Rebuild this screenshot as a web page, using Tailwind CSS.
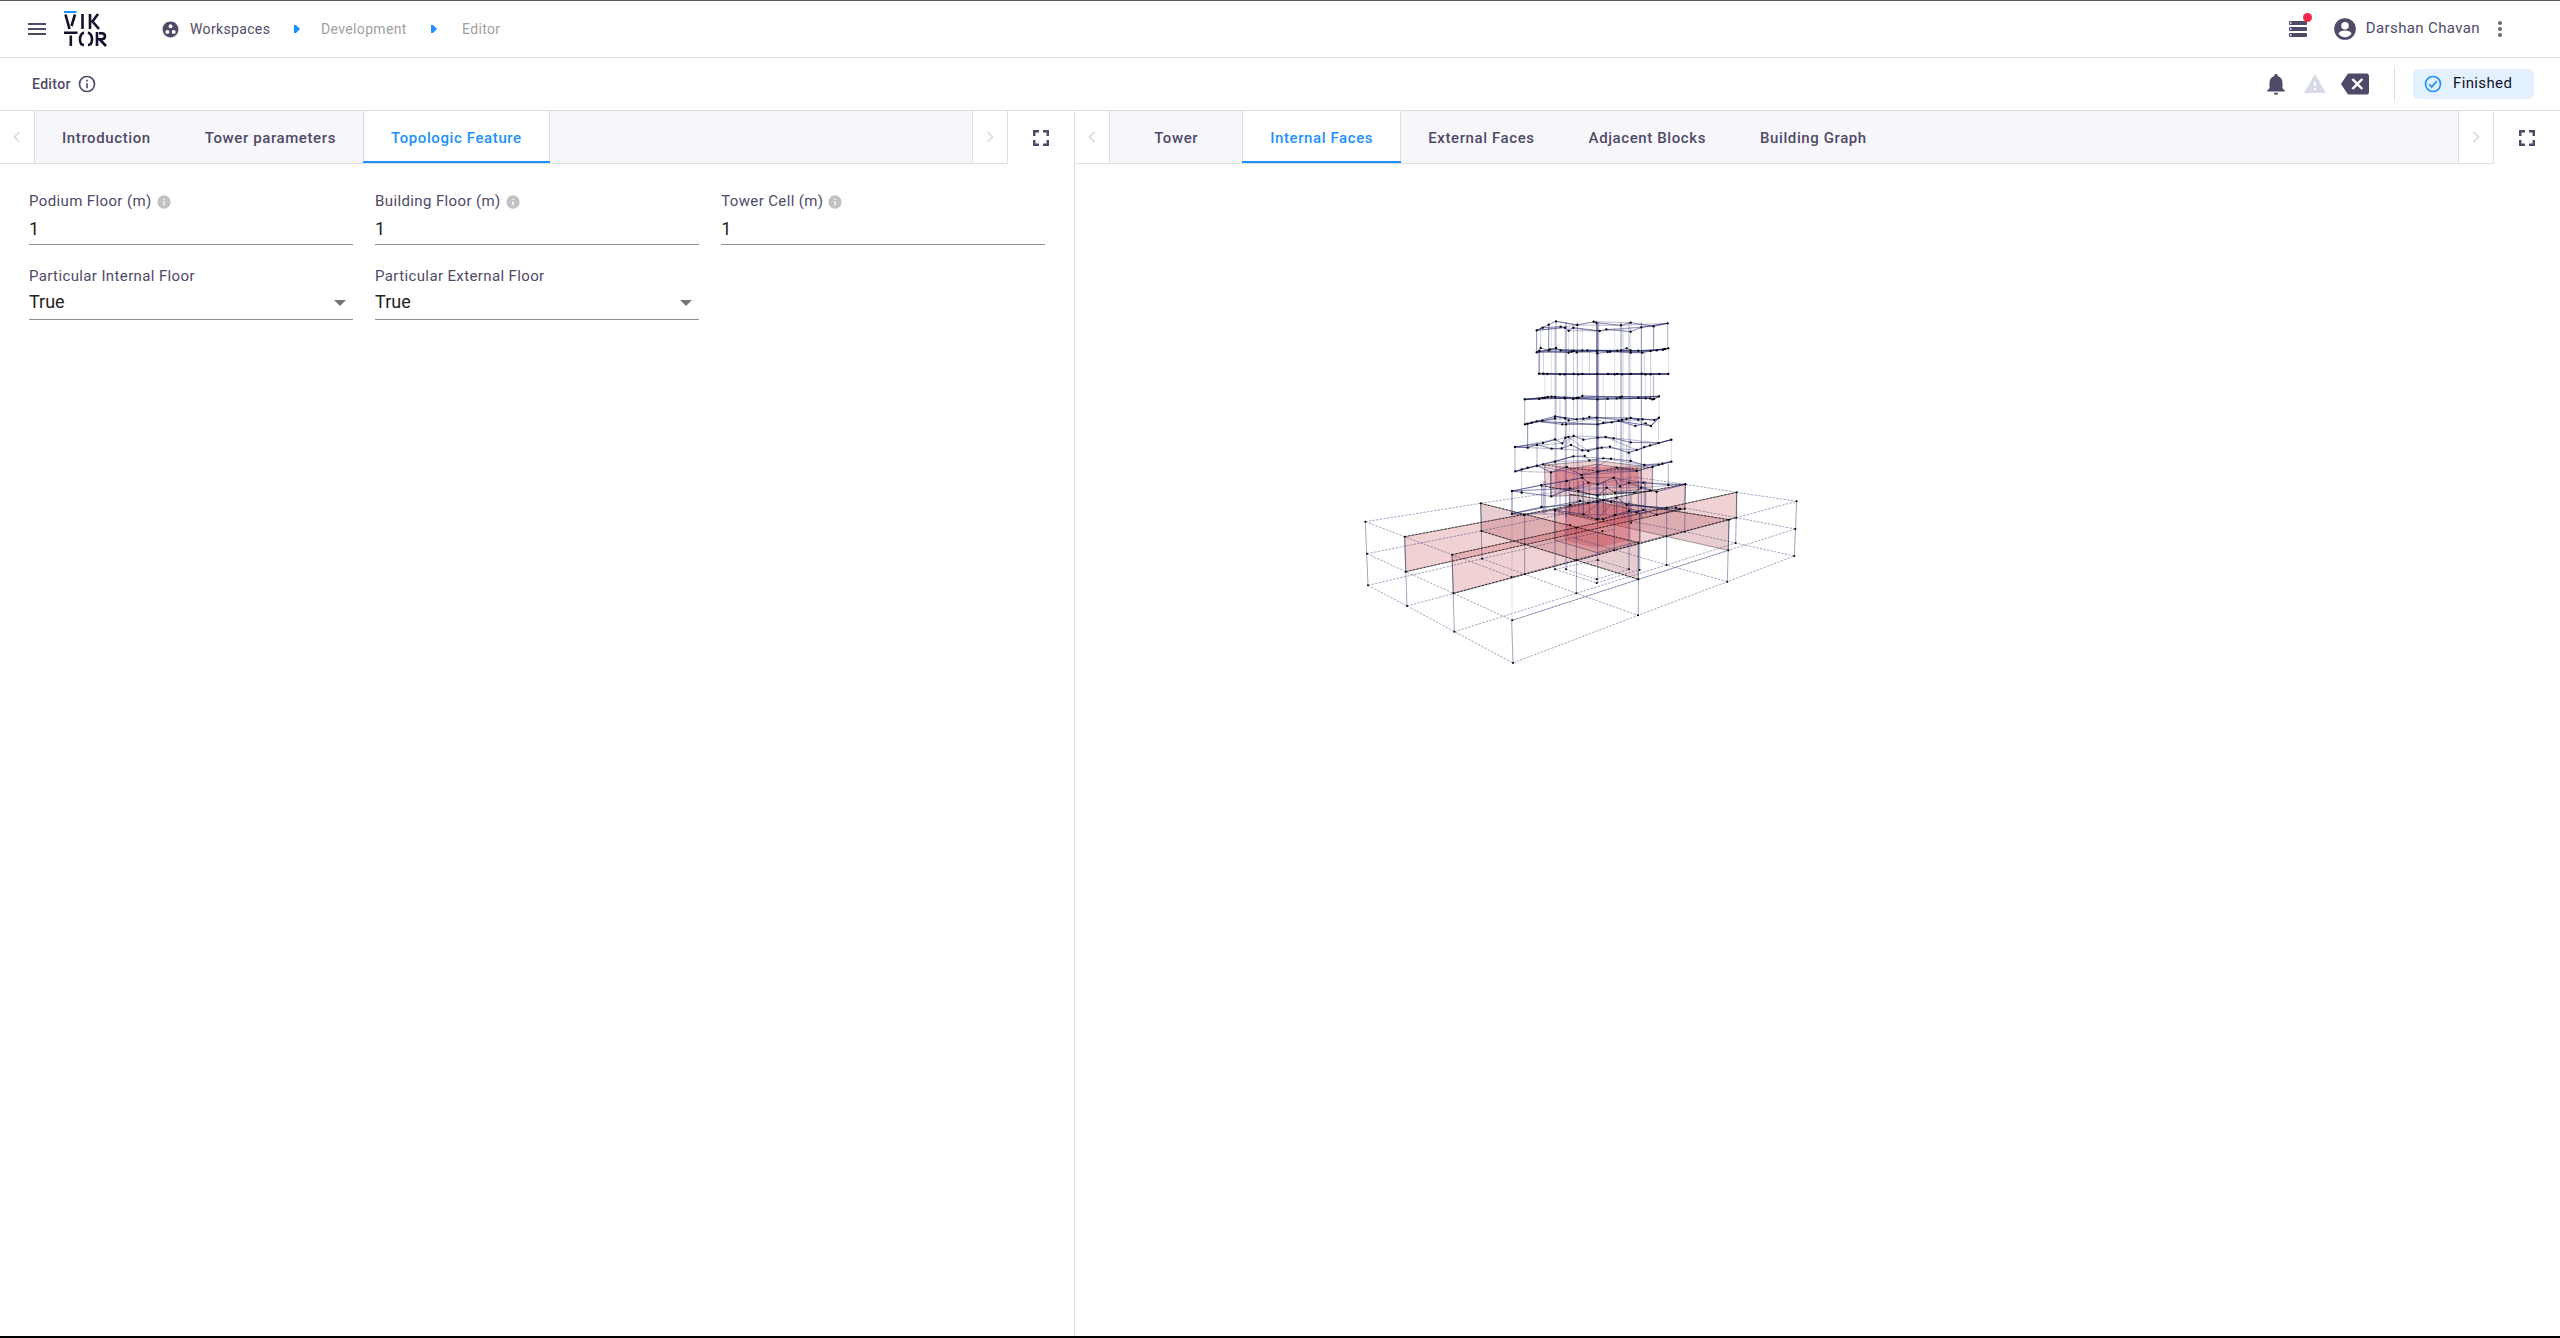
<!DOCTYPE html>
<html lang="en">
<head>
<meta charset="utf-8">
<title>Editor</title>
<script src="https://cdn.jsdelivr.net/npm/@tailwindcss/browser@4"></script>
</head>
<body class="min-h-screen flex flex-col bg-white text-[#4f4a67] font-[Roboto,sans-serif] text-sm border-t border-t-[#5c5a66] border-b-2 border-b-black">
<header class="h-[57px] flex items-center border-b border-[#dedee0] pl-[25px] pr-12">
  <button aria-label="Menu"><svg class="size-6" viewBox="0 0 24 24" fill="currentColor"><path d="M3 6h18v2H3zM3 11h18v2H3zM3 16h18v2H3z"/></svg></button>
  <a href="#" aria-label="Viktor" class="ml-[15px]"><svg class="w-[43px] h-9" viewBox="0 0 43 36" fill="none" stroke="#14122b" stroke-width="2.6"><path d="M0 1h12.500" stroke="#1e90ff" stroke-width="2"/><path d="M1.500 3.500L5.500 18M11 3.500L7.500 15M18.500 3v15M26 3v15M34 3L28.500 10.500L35 18M0 21.800h13.500M6.800 24.500V35M20 21.500Q16 23 16 28.500T20 34M24 21.500Q28 23 28 28.500T24 34M33 21v14M35 22.200h2.500q3.500 0 3.500 3t-3.500 3H35.500L42 35"/></svg></a>
  <nav class="flex items-center ml-[54px] tracking-wide" aria-label="Breadcrumb">
    <svg class="size-[19px] mr-2.5" viewBox="0 0 24 24" fill="currentColor"><path d="M12 2C6.480 2 2 6.480 2 12s4.480 10 10 10 10-4.480 10-10S17.520 2 12 2zM8 17.500a2.500 2.500 0 110-5 2.500 2.500 0 010 5zM9.500 8a2.500 2.500 0 115 0 2.500 2.500 0 01-5 0zM16 17.500a2.500 2.500 0 110-5 2.500 2.500 0 010 5z"/></svg>
    <a href="#" class="w-[104px]">Workspaces</a>
    <svg class="w-1.5 h-2 mr-[21px]" viewBox="0 0 6 8" fill="#1e90ff"><path d="M0 0h2l4 4-4 4H0z"/></svg>
    <a href="#" class="w-[110px] text-[#9f9fa3]">Development</a>
    <svg class="w-1.5 h-2 mr-[25px]" viewBox="0 0 6 8" fill="#1e90ff"><path d="M0 0h2l4 4-4 4H0z"/></svg>
    <a href="#" class="text-[#9f9fa3]">Editor</a>
  </nav>
  <div class="ml-auto flex items-center">
    <button class="relative mr-[22px]" aria-label="Jobs"><svg class="size-6" viewBox="0 0 24 24" fill="currentColor"><path fill-rule="evenodd" d="M4 4h16a1 1 0 011 1v2a1 1 0 01-1 1H4a1 1 0 01-1-1V5a1 1 0 011-1zm0 1.300v1.400h1.500V5.300zM4 10h16a1 1 0 011 1v2a1 1 0 01-1 1H4a1 1 0 01-1-1V11a1 1 0 011-1zm0 1.300v1.400h1.500v-1.400zM4 16h16a1 1 0 011 1V19a1 1 0 01-1 1H4a1 1 0 01-1-1v-2a1 1 0 011-1zm0 1.300v1.400h1.500v-1.400z"/></svg><span class="absolute -top-1 -right-0.5 size-[9px] rounded-full bg-[#f02849]"></span></button>
    <svg class="size-[26px] mr-2" viewBox="0 0 24 24" fill="currentColor"><path d="M12 2a10 10 0 100 20 10 10 0 000-20zm0 3.500a3.500 3.500 0 110 7 3.500 3.500 0 010-7zm0 14.100a7.200 7.200 0 01-6-3.200c.03-2 4-3.100 6-3.100s5.970 1.100 6 3.100a7.200 7.200 0 01-6 3.200z"/></svg>
    <span class="text-[15px] tracking-wide mr-2">Darshan Chavan</span>
    <button aria-label="More"><svg class="size-6" viewBox="0 0 24 24" fill="#6c6a72"><circle cx="12" cy="6" r="2"/><circle cx="12" cy="12" r="2"/><circle cx="12" cy="18" r="2"/></svg></button>
  </div>
</header>
<div class="h-[53px] flex items-center border-b border-[#dedee0] pl-8 pr-[26px]">
  <h1 class="font-medium mr-1.5 tracking-wide">Editor</h1>
  <button aria-label="Info"><svg class="size-5" viewBox="0 0 24 24" fill="currentColor"><path fill-rule="evenodd" d="M12 2a10 10 0 100 20 10 10 0 000-20zm0 2a8 8 0 110 16 8 8 0 010-16zM11 7h2v2h-2zM11 11h2v6h-2z"/></svg></button>
  <div class="ml-auto flex items-center">
    <button class="mr-3.5" aria-label="Notifications"><svg class="size-[26px]" viewBox="0 0 24 24" fill="currentColor"><path d="M12 22a2 2 0 002-2h-4a2 2 0 002 2zm6-6v-5c0-3.070-1.640-5.640-4.500-6.320V4a1.500 1.500 0 00-3 0v.68C7.630 5.360 6 7.920 6 11v5l-2 2v1h16v-1z"/></svg></button>
    <button class="mr-3.5" aria-label="Warnings"><svg class="size-6" viewBox="0 0 24 24" fill="#d9daE8"><path d="M1 21h22L12 2zm12-3h-2v-2h2zm0-4h-2v-4h2z"/></svg></button>
    <button class="mr-[25px]" aria-label="Clear"><svg class="size-7" viewBox="0 0 24 24" fill="currentColor"><path d="M22 3H7c-.69 0-1.230.35-1.590.88L0 12l5.410 8.110c.36.53.9.890 1.590.890h15c1.100 0 2-.9 2-2V5c0-1.100-.9-2-2-2zm-3 12.590L17.590 17 14 13.410 10.410 17 9 15.590 12.590 12 9 8.410 10.410 7 14 10.590 17.590 7 19 8.410 15.410 12z"/></svg></button>
    <div class="h-9 w-px bg-[#e2e2e6] mr-[18px]"></div>
    <div class="h-[30px] w-[121px] rounded-md bg-[#e3f1ff] flex items-center pl-2.5 text-[15px] text-[#14122b] tracking-wide"><svg class="size-5 mr-2.5" viewBox="0 0 24 24" fill="none" stroke="#1e90ff" stroke-width="2"><circle cx="12" cy="12" r="9"/><path d="M7.500 12.500l3 3 6-7"/></svg>Finished</div>
  </div>
</div>
<main class="flex-1 flex">
  <section class="w-[42%] shrink-0 border-r border-[#dedee0]">
    <div class="flex h-[53px]">
      <div class="flex-1 flex border-b border-r border-[#dedee0] bg-[#f7f6fb] font-medium text-[15px] tracking-[0.04em]">
        <button class="w-[35px] bg-white border-r border-[#dedee0] flex items-center justify-center" aria-label="Previous"><svg class="size-5" viewBox="0 0 24 24" fill="none" stroke="#d9daE8" stroke-width="2"><path d="M15 6l-6 6 6 6"/></svg></button>
        <button class="px-[27px] pt-[3px]">Introduction</button>
        <button class="px-[27px] pt-[3px]">Tower parameters</button>
        <button class="px-[27px] pt-[3px] relative bg-white text-[#1e90ff] border-x border-x-[#dedee0]">Topologic Feature<span class="absolute -inset-x-px bottom-0 h-0.5 bg-[#1e90ff]"></span></button>
        <button class="ml-auto w-[35px] bg-white border-l border-[#dedee0] flex items-center justify-center" aria-label="Next"><svg class="size-5" viewBox="0 0 24 24" fill="none" stroke="#d9daE8" stroke-width="2"><path d="M9 6l6 6-6 6"/></svg></button>
      </div>
      <button class="w-[66px] flex items-center justify-center" aria-label="Full screen"><svg class="size-4" viewBox="0 0 16 16" fill="none" stroke="currentColor" stroke-width="2.500"><path d="M1.250 6V1.250H6M10 1.250h4.750V6M14.750 10v4.750H10M6 14.750H1.250V10"/></svg></button>
    </div>
    <form class="grid grid-cols-3 gap-x-[22px] gap-y-[22px] px-[29px] pt-7 text-[15px] tracking-wide">
      <div class="flex flex-col"><label for="podium" class="h-5 flex items-center">Podium Floor (m)<svg class="size-4 ml-1" viewBox="0 0 24 24" fill="#c2c2c2"><path d="M12 2a10 10 0 100 20 10 10 0 000-20zm1 15h-2v-6h2zm0-8h-2V7h2z"/></svg></label><input id="podium" value="1" class="h-[33px] w-full text-lg tracking-normal text-[#222] border-b border-[#8f8f91] outline-none"></div>
      <div class="flex flex-col"><label for="building" class="h-5 flex items-center">Building Floor (m)<svg class="size-4 ml-1" viewBox="0 0 24 24" fill="#c2c2c2"><path d="M12 2a10 10 0 100 20 10 10 0 000-20zm1 15h-2v-6h2zm0-8h-2V7h2z"/></svg></label><input id="building" value="1" class="h-[33px] w-full text-lg tracking-normal text-[#222] border-b border-[#8f8f91] outline-none"></div>
      <div class="flex flex-col"><label for="cell" class="h-5 flex items-center">Tower Cell (m)<svg class="size-4 ml-1" viewBox="0 0 24 24" fill="#c2c2c2"><path d="M12 2a10 10 0 100 20 10 10 0 000-20zm1 15h-2v-6h2zm0-8h-2V7h2z"/></svg></label><input id="cell" value="1" class="h-[33px] w-full text-lg tracking-normal text-[#222] border-b border-[#8f8f91] outline-none"></div>
      <div class="flex flex-col relative"><label for="internal" class="h-5 flex items-center">Particular Internal Floor</label><select id="internal" class="h-[33px] w-full pb-0.5 text-lg leading-6 tracking-normal text-[#222] border-b border-[#8f8f91] appearance-none outline-none"><option>True</option><option>False</option></select><svg class="absolute right-[7px] bottom-3.5 w-3 h-1.5 pointer-events-none" viewBox="0 0 12 6" fill="#757575"><path d="M0 0h12L6 6z"/></svg></div>
      <div class="flex flex-col relative"><label for="external" class="h-5 flex items-center">Particular External Floor</label><select id="external" class="h-[33px] w-full pb-0.5 text-lg leading-6 tracking-normal text-[#222] border-b border-[#8f8f91] appearance-none outline-none"><option>True</option><option>False</option></select><svg class="absolute right-[7px] bottom-3.5 w-3 h-1.5 pointer-events-none" viewBox="0 0 12 6" fill="#757575"><path d="M0 0h12L6 6z"/></svg></div>
    </form>
  </section>
  <section class="flex-1">
    <div class="flex h-[53px]">
      <div class="flex-1 flex border-b border-r border-[#dedee0] bg-[#f7f6fb] font-medium text-[15px] tracking-[0.04em]">
        <button class="w-[35px] bg-white border-r border-[#dedee0] flex items-center justify-center" aria-label="Previous"><svg class="size-5" viewBox="0 0 24 24" fill="none" stroke="#d9daE8" stroke-width="2"><path d="M15 6l-6 6 6 6"/></svg></button>
        <button class="px-[27px] pt-[3px] min-w-[132px]">Tower</button>
        <button class="px-[27px] pt-[3px] relative bg-white text-[#1e90ff] border-x border-x-[#dedee0]">Internal Faces<span class="absolute -inset-x-px bottom-0 h-0.5 bg-[#1e90ff]"></span></button>
        <button class="px-[27px] pt-[3px]">External Faces</button>
        <button class="px-[27px] pt-[3px]">Adjacent Blocks</button>
        <button class="px-[27px] pt-[3px]">Building Graph</button>
        <button class="ml-auto w-[35px] bg-white border-l border-[#dedee0] flex items-center justify-center" aria-label="Next"><svg class="size-5" viewBox="0 0 24 24" fill="none" stroke="#d9daE8" stroke-width="2"><path d="M9 6l6 6-6 6"/></svg></button>
      </div>
      <button class="w-[66px] flex items-center justify-center" aria-label="Full screen"><svg class="size-4" viewBox="0 0 16 16" fill="none" stroke="currentColor" stroke-width="2.500"><path d="M1.250 6V1.250H6M10 1.250h4.750V6M14.750 10v4.750H10M6 14.750H1.250V10"/></svg></button>
    </div>
    <div class="pt-[137px] pl-[265px]">
      <svg class="w-[480px] h-[380px]" viewBox="0 -420 1440 1140" fill="none" role="img" aria-label="Internal faces model">
        <g fill="#cd5c64" fill-opacity=".28" stroke="#222" stroke-width="2.500" stroke-opacity=".5">
          <path d="M194 287L1036 130L1034 203L197 392z"/>
          <path d="M336 341L1190 154V230L340 457z"/>
          <path d="M422 187L895 305V415L424 270z" fill="#aa4b55"/>
          <path d="M690 160L1167 236L1165 328L690 222z" fill="#aa4b55"/>
          <path d="M643 207L770 182L900 210V300L771 335L645 298z"/>
          <path d="M676 190H872V298L771 320L676 300z" fill="#c02c3c" stroke="none"/>
          <path d="M613 72L770 59L937 79V150L771 163L615 136z"/>
          <path d="M632 94L770 70L903 88V145L771 160L632 166z"/>
          <path d="M648 78H895V138L771 128L676 150L648 142z" fill="#c02c3c" stroke="none"/>
        </g>
        <g stroke="#191c64" stroke-width="3" stroke-opacity=".4">
          <g stroke-dasharray="7 4">
            <path d="M76 242L422 187L690 147L880 108M81 338L424 270L690 215M84 433L426 353L700 290L823 265M1370 181L1190 154L1036 130L880 108M1366 264L1189 230L1030 200M1363 345L1187 306L1034 272L872 240"/>
            <path d="M76 242L194 287L336 341L515 408L895 305L1167 236L1370 181M81 338L197 392L340 457L517 538L895 415L1165 328L1366 264M84 433L201 495L343 572L519 666L894 523L1162 422L1363 345"/>
            <path d="M201 495L555 400L823 328L1034 272M343 572L709 457L980 372L1187 306M426 353L555 400L709 457L894 523M700 290L980 372L1162 422M517 538L1165 328M645 385L770 426L900 385M678 385L770 415L867 385M645 385L773 357L867 385"/>
          </g>
          <path d="M76 242L84 433M194 287L201 495M336 341L343 572M515 538L519 666M422 187L426 353M554 221V400M709 260V457M895 305V523M1167 236L1162 422M1370 181L1363 345M980 200V372M1190 154L1187 306M1036 130L1034 272M645 207V385M678 200V385M867 180V385M899 215V385M773 180V426M605 135V200M950 152V222M873 150V245M823 180V328"/>
          <path d="M516 150V538" stroke-opacity=".12"/>
        </g>
        <g stroke="#000" stroke-width="2.500" stroke-dasharray="7 4" stroke-opacity=".75"><path d="M194 287L1036 130M336 341L1190 154M340 457L1189 230M422 187L895 305M690 160L1167 236M424 270L895 415M197 392L1034 203M643 210L770 235L900 210M613 72L770 90L937 79M615 136L771 163L937 150"/></g>
        <g id="tower" transform="translate(480 -420)"></g>
        <path stroke="#000" stroke-width="6" stroke-linecap="round" d="M76 242h0M81 338h0M84 433h0M194 287h0M197 392h0M201 495h0M336 341h0M340 457h0M343 572h0M515 408h0M517 538h0M519 666h0M422 187h0M424 270h0M426 353h0M554 221h0M554 310h0M555 400h0M709 260h0M709 357h0M709 457h0M895 305h0M895 415h0M894 523h0M1167 236h0M1165 328h0M1162 422h0M1370 181h0M1366 264h0M1363 345h0M980 200h0M980 286h0M980 372h0M1190 154h0M1189 230h0M1187 306h0M1036 130h0M1034 203h0M1034 272h0M645 385h0M678 385h0M867 385h0M899 387h0M770 415h0M770 426h0M773 357h0M787 270h0M873 245h0M823 328h0M690 252h0M770 235h0M516 150h0M516 218h0M605 135h0M605 198h0M985 131h0M950 152h0M950 222h0M545 155h0"/>
      </svg>
    </div>
  </section>
</main>
<script>
// Tower storeys: nodes of each slab in screen projection
const levels = [
  [[110,88],[168,61],[289,65],[392,65],[503,67],[461,76],[424,79],[392,92],[363,73],[299,90],[281,62],[232,72],[206,89],[195,80],[182,77],[146,71],[128,80],[319,85],[220,80]],
  [[110,154],[122,141],[168,141],[182,148],[221,150],[292,157],[323,153],[352,149],[380,142],[392,148],[427,155],[452,150],[505,142],[489,146],[290,150],[146,148],[262,148],[230,154],[118,150],[150,145],[206,155],[215,152],[247,148],[330,152],[363,148],[415,149],[470,148],[495,144],[392,155]],
  [[117,218],[130,218],[142,219],[180,220],[194,220],[221,219],[235,220],[247,219],[292,219],[324,219],[344,220],[352,219],[366,220],[392,219],[425,218],[437,220],[452,220],[478,219],[505,219]],
  [[74,295],[118,294],[135,290],[143,288],[155,287],[165,288],[195,292],[220,294],[230,291],[236,290],[247,285],[293,295],[323,293],[350,292],[360,289],[366,287],[415,290],[437,292],[450,292],[457,295],[477,286],[462,294],[194,290],[128,291]],
  [[75,370],[83,368],[95,365],[110,361],[127,359],[165,352],[198,370],[206,358],[230,355],[250,353],[268,348],[293,370],[310,366],[335,364],[356,360],[366,357],[380,354],[392,351],[415,356],[437,367],[453,375],[477,350],[463,357],[406,375],[187,370],[165,346],[195,352],[290,350],[428,355]],
  [[45,438],[83,440],[111,431],[129,426],[165,415],[187,427],[205,408],[221,405],[250,416],[293,410],[317,408],[341,412],[392,424],[433,438],[476,426],[514,416],[386,455],[293,442],[247,448],[155,443],[265,450],[196,410],[213,432],[305,440],[330,437],[410,447],[450,433],[185,442]],
  [[46,511],[65,505],[83,500],[129,490],[165,482],[220,466],[254,465],[268,478],[310,472],[333,473],[392,480],[433,492],[458,497],[487,488],[514,482],[293,512],[244,522],[153,514],[111,494],[200,498],[350,500],[410,510],[476,491]],
  [[36,570],[65,574],[124,552],[154,586],[200,540],[247,530],[293,550],[341,530],[387,545],[424,560],[470,572],[505,552],[556,550],[293,584],[403,575],[345,575],[210,562],[235,570],[265,545],[320,560],[360,556],[450,568],[430,545]],
  [[36,638],[72,642],[124,618],[165,627],[210,612],[293,603],[333,602],[380,612],[430,627],[470,641],[387,630],[310,655],[293,655],[540,624],[528,620],[500,621],[240,600],[265,606],[310,598],[350,590],[250,640],[345,642],[410,634]]
];
// Each column: x, bottom, top
const columns = [[110,154,88],[122,148,78],[503,142,67],[505,219,142],[117,219,150],[119,219,150],[74,370,295],[477,350,286],[83,440,368],[476,416,350],[45,511,438],[514,482,416],[36,638,570],[65,574,505],[505,552,487],[556,600,550],[461,148,76],[452,292,150],[461,295,220],[206,150,89],[153,586,514],[458,570,497],[111,500,431],[154,295,78],[146,150,71]];
[165,168,195,198,221,232,247,290,293,296,344,363,369,387,392,424].forEach((x, i) => columns.push([x, i % 3 ? 610 : 650, i % 2 ? 64 : 80]));
[130,135,180,208,236,250,268,310,317,350,380,415,433,437].forEach((x, i) => { const a = [150,220,292,360,430,490][i % 6]; columns.push([x, a + 74, a]); columns.push([x, 640, 540]); });
const ink = '#191c64';
const g = document.getElementById('tower');
const add = (d, a) => { const p = document.createElementNS('http://www.w3.org/2000/svg', 'path'); p.setAttribute('d', d); for (const k in a) p.setAttribute(k, a[k]); g.append(p); };
columns.forEach(([x, b, t], i) => add(`M${x} ${t}V${b}`, { stroke: ink, 'stroke-width': 3, 'stroke-opacity': [.5, .22, .35, .14][i % 4] }));
add('M292 64V650', { stroke: ink, 'stroke-width': 4, 'stroke-opacity': .45 });
levels.forEach((pts, n) => {
  const s = [...pts].sort((a, b) => a[0] - b[0]), mid = s.reduce((t, p) => t + p[1], 0) / s.length;
  const ends = i => !i || i === s.length - 1;
  const up = s.filter((p, i) => p[1] <= mid || ends(i)), lo = s.filter((p, i) => p[1] > mid || ends(i));
  [up, lo].forEach(l => {
    add('M' + l.map(p => p.join(' ')).join('L'), { stroke: ink, 'stroke-width': 3, 'stroke-opacity': .55 });
    const beams = l.filter((p, i) => i % 3 === 0 || i === l.length - 1);
    add('M' + beams.map(p => p.join(' ')).join('L'), { stroke: ink, 'stroke-width': 3, 'stroke-opacity': n > 0 && n < 5 ? .6 : .3 });
  });
  for (let i = 0; i + 5 < s.length; i += 3) add(`M${s[i]}L${s[i + 5]}`, { stroke: ink, 'stroke-width': 2.5, 'stroke-opacity': .35 });
  add(pts.map(p => `M${p[0]} ${p[1]}h0`).join(''), { stroke: '#000', 'stroke-width': 7, 'stroke-linecap': 'round' });
});
</script>
</body>
</html>
